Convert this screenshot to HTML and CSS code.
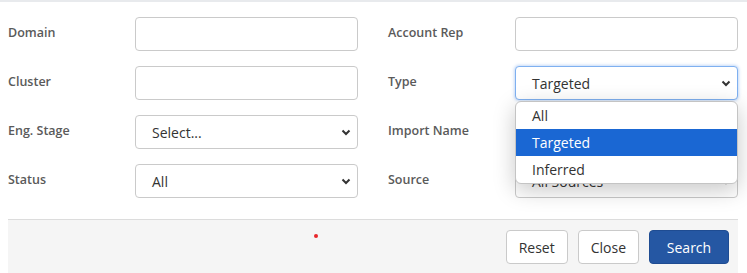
FILE: index.html
```html
<!DOCTYPE html>
<html lang="en">
<head>
    <meta charset="UTF-8">
    <meta name="viewport" content="width=device-width, initial-scale=1.0">
    <title>Account Search</title>
    <link rel="stylesheet" href="styles.css">
</head>
<body>
    <div class="search-panel">
        <div class="search-form">
            <div class="form-col">
                <div class="form-row">
                    <label>Domain</label>
                    <input type="text" class="form-control">
                </div>
                <div class="form-row">
                    <label>Cluster</label>
                    <input type="text" class="form-control">
                </div>
                <div class="form-row">
                    <label>Eng. Stage</label>
                    <div class="select-wrap">
                        <div class="form-control select">Select...</div>
                        <svg class="chevron" width="10" height="7" viewBox="0 0 10 7"><path d="M1.5 1.5 L5 5 L8.5 1.5" fill="none" stroke="#333" stroke-width="2"/></svg>
                    </div>
                </div>
                <div class="form-row">
                    <label>Status</label>
                    <div class="select-wrap">
                        <div class="form-control select">All</div>
                        <svg class="chevron" width="10" height="7" viewBox="0 0 10 7"><path d="M1.5 1.5 L5 5 L8.5 1.5" fill="none" stroke="#333" stroke-width="2"/></svg>
                    </div>
                </div>
            </div>

            <div class="form-col">
                <div class="form-row">
                    <label>Account Rep</label>
                    <input type="text" class="form-control">
                </div>
                <div class="form-row">
                    <label>Type</label>
                    <div class="select-wrap">
                        <div class="form-control select focused">Targeted</div>
                        <svg class="chevron" width="10" height="7" viewBox="0 0 10 7"><path d="M1.5 1.5 L5 5 L8.5 1.5" fill="none" stroke="#333" stroke-width="2"/></svg>
                        <ul class="dropdown">
                            <li>All</li>
                            <li class="active">Targeted</li>
                            <li>Inferred</li>
                        </ul>
                    </div>
                </div>
                <div class="form-row">
                    <label>Import Name</label>
                    <div class="select-wrap">
                        <div class="form-control select"></div>
                    </div>
                </div>
                <div class="form-row">
                    <label>Source</label>
                    <div class="select-wrap">
                        <div class="form-control select">All Sources</div>
                        <svg class="chevron" width="10" height="7" viewBox="0 0 10 7"><path d="M1.5 1.5 L5 5 L8.5 1.5" fill="none" stroke="#333" stroke-width="2"/></svg>
                    </div>
                </div>
            </div>
        </div>

        <div class="panel-footer">
            <span class="marker"></span>
            <button class="btn">Reset</button>
            <button class="btn">Close</button>
            <button class="btn btn-primary">Search</button>
        </div>
    </div>
</body>
</html>
```

FILE: styles.css
```css
* {
    margin: 0;
    padding: 0;
    box-sizing: border-box;
}

body {
    font-family: "Open Sans", "Noto Sans", sans-serif;
    background: white;
    color: #333;
    border-top: 2px solid #e8eaed;
}

.search-panel {
    width: 730px;
    margin-left: 8px;
}

.search-form {
    display: flex;
    gap: 30px;
    padding-top: 15px;
}

.form-col {
    display: flex;
    flex-direction: column;
    gap: 15px;
}

.form-row {
    display: flex;
    align-items: center;
}

.form-row label {
    width: 127px;
    font-size: 12.5px;
    font-weight: 600;
    color: #5a5a5a;
    padding-bottom: 3px;
}

.form-control {
    width: 223px;
    height: 34px;
    border: 1px solid #cacaca;
    border-radius: 4px;
    background: white;
    font-family: inherit;
    font-size: 14px;
    color: #333;
}

.select-wrap {
    position: relative;
}

.select {
    padding: 7px 16px 0;
}

.select.focused {
    border-color: #7fb0f0;
    box-shadow: 0 0 3px 1px rgba(60, 130, 230, 0.3);
}

.chevron {
    position: absolute;
    right: 7px;
    top: 14px;
}

.dropdown {
    position: absolute;
    top: 35px;
    left: 0;
    width: 223px;
    list-style: none;
    background: white;
    border: 1px solid #c4c4c4;
    border-radius: 6px;
    box-shadow: 0 6px 22px rgba(0, 0, 0, 0.22);
    overflow: hidden;
    z-index: 5;
}

.dropdown li {
    height: 27px;
    line-height: 27px;
    padding-left: 16px;
    font-size: 14px;
    color: #333;
}

.dropdown li.active {
    background: #1a67d3;
    color: white;
}

.panel-footer {
    position: relative;
    margin-top: 21px;
    height: 60px;
    border-top: 1px solid #dcdcdc;
    background: #f5f5f5;
    display: flex;
    justify-content: flex-end;
    align-items: flex-start;
    gap: 10px;
    padding: 10px 9px 0 0;
}

.marker {
    position: absolute;
    left: 306px;
    top: 14px;
    width: 4px;
    height: 4px;
    border-radius: 50%;
    background: #e8262a;
}

.btn {
    height: 34px;
    padding: 0 12px;
    border: 1px solid #cacaca;
    border-radius: 4px;
    background: white;
    font-family: inherit;
    font-size: 14px;
    color: #333;
}

.btn-primary {
    width: 80px;
    background: #2557a3;
    border-color: #1f4c92;
    color: white;
}
```
